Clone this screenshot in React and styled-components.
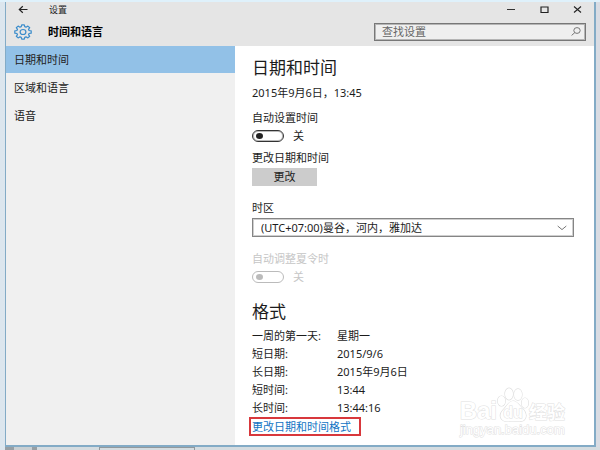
import React from "react";
import styled, { createGlobalStyle } from "styled-components";

const GlobalStyle = createGlobalStyle`
  *, *::before, *::after { box-sizing: border-box; }
  body {
    margin: 0;
    color: #1c1c1c;
    font: 11px/16px "Noto Sans", "Noto Sans CJK SC", sans-serif;
  }
  button, input, select { font: inherit; color: inherit; margin: 0; }
  h1, h2, p, dl, dd, ul { margin: 0; padding: 0; }
`;

const Desktop = styled.div`
  min-height: 100vh;
  display: flex;
  flex-direction: column;
  padding: 2px 4px 0 5px;
  background: linear-gradient(to right, #dce6ee 0, #e4eef6 50%, #d9dce3 51%, #d9dce3 100%);
  box-shadow: inset 0 2px #dff1fb;
`;

const Window = styled.div`
  position: relative;
  flex: 1;
  display: flex;
  flex-direction: column;
  border: solid #83abc6;
  border-width: 0 2px 2px 1px;
  background: #fff;
`;

const Header = styled.header`
  background: #e5e5e5;
`;

const TitleBar = styled.div`
  height: 15px;
  display: flex;
  align-items: center;
  padding: 0 12px;
  font-size: 9px;
`;

const IconButton = styled.button`
  display: flex;
  padding: 0;
  border: 0;
  background: none;
`;

const WindowTitle = styled.span`
  margin-left: 21px;
  flex: 1;
`;

const Controls = styled.div`
  display: flex;
  gap: 24px;
`;

const PageBar = styled.div`
  height: 29px;
  display: flex;
  align-items: center;
  padding: 0 8px;
`;

const PageTitle = styled.h1`
  margin-left: 16px;
  flex: 1;
  font-size: 11px;
  line-height: 16px;
  font-weight: 700;
  color: #000;
`;

const SearchBox = styled.label`
  flex: 0 1 212px;
  height: 18px;
  display: flex;
  align-items: center;
  padding: 0 4px 0 7px;
  border: 1px solid #777;
  outline: 1px solid #b5b5b5;
  outline-offset: -2px;
  background: #efefef;
`;

const SearchInput = styled.input`
  flex: 1;
  min-width: 0;
  height: 14px;
  padding: 0;
  border: 0;
  outline: 0;
  background: none;
  &::placeholder { color: #666; opacity: 1; }
`;

const Body = styled.div`
  flex: 1;
  display: grid;
  grid-template-columns: minmax(120px, 229px) 1fr;
`;

const Sidebar = styled.nav`
  background: #f0f0f0;
`;

const NavList = styled.ul`
  list-style: none;
  display: flex;
  flex-direction: column;
  gap: 1px;
`;

const NavLink = styled.a`
  display: block;
  padding: 0 8px;
  line-height: 27px;
  text-decoration: none;
  color: #222;
  background: ${(p) => (p.$active ? "#92c1e7" : "transparent")};
`;

const Content = styled.main`
  padding: 10px 20px 8px 17px;
`;

const Heading = styled.h2`
  margin-top: ${(p) => (p.$spaced ? "15px" : "0")};
  font-size: 17px;
  line-height: 24px;
  font-weight: 400;
`;

const CurrentTime = styled.p`
  margin-top: 5px;
`;

const Field = styled.div`
  display: flex;
  flex-direction: column;
  align-items: flex-start;
  margin-top: ${(p) => p.$space};
  gap: 2px;
  color: ${(p) => (p.$disabled ? "#c6c6c6" : "inherit")};
`;

const ToggleRow = styled.div`
  display: flex;
  align-items: center;
  gap: 9px;
`;

const Toggle = styled.input`
  appearance: none;
  width: 32px;
  height: 12px;
  display: flex;
  align-items: center;
  padding: 0 3px;
  border: 1px solid #333;
  border-radius: 6px;
  box-shadow: inset 0 0 0 1px #3335;
  &::before {
    content: "";
    width: 7px;
    height: 6px;
    border-radius: 50%;
    background: #222;
  }
  &:checked { justify-content: flex-end; }
  &:disabled { border-color: #bbb; box-shadow: none; }
  &:disabled::before { background: #bbb; }
`;

const ChangeButton = styled.button`
  width: 65px;
  height: 18px;
  padding: 0;
  border: 0;
  background: #ccc;
`;

const SelectBox = styled.div`
  align-self: stretch;
  display: grid;
  grid-template-columns: 1fr 24px;
  align-items: center;
  & > svg { grid-area: 1 / 2; pointer-events: none; justify-self: center; z-index: 1; }
`;

const Select = styled.select`
  grid-area: 1 / 1 / 2 / 3;
  appearance: none;
  width: 100%;
  height: 19px;
  padding: 0 24px 0 8px;
  border: 1px solid #858585;
  border-radius: 0;
  outline: 1px solid #cfcfcf;
  outline-offset: -2px;
  background: #fff;
`;

const Formats = styled.dl`
  margin-top: 3px;
  display: grid;
  grid-template-columns: 85px 1fr;
  line-height: 18px;
`;

const FormatLink = styled.a`
  display: block;
  width: max-content;
  margin-left: -3px;
  padding: 0 8px 0 1px;
  border: 2px solid #d8383c;
  line-height: 15px;
  text-decoration: none;
  color: #1274c4;
`;

const Watermark = styled.div`
  position: absolute;
  right: 29px;
  bottom: 8px;
  display: flex;
  flex-direction: column;
  align-items: center;
  color: #fff;
  -webkit-text-stroke: 1px #e0e0e0;
  paint-order: stroke fill;
  pointer-events: none;
`;

const Brand = styled.div`
  display: flex;
  align-items: flex-end;
  font: 700 24px/24px "Liberation Sans", sans-serif;
`;

const BrandCjk = styled.span`
  font: 700 18px/24px "Noto Sans CJK SC", sans-serif;
`;

const SiteName = styled.span`
  font: 13px/14px "Liberation Sans", sans-serif;
`;

const Taskbar = styled.div`
  height: 3px;
  margin: 0 -4px 0 0;
  display: flex;
  gap: 62px;
  background: #d5dce0;
`;

const TaskIcon = styled.div`
  width: 32px;
  background: linear-gradient(to right, #979fa4 9px, #c9cfd2 9px 27px, #979fa4 27px);
`;

const TaskItem = styled.div`
  width: 96px;
  border: 1px solid #92999d;
  border-bottom: 0;
`;

const GEAR = (() => {
  const pts = [];
  for (let i = 0; i < 8; i++) {
    [[-16, 6.3], [-9, 8.3], [9, 8.3], [16, 6.3]].forEach(([d, r]) => {
      const a = ((i * 45 + d) * Math.PI) / 180;
      pts.push(`${(9 + r * Math.sin(a)).toFixed(2)},${(8 - r * 0.88 * Math.cos(a)).toFixed(2)}`);
    });
  }
  return pts.join(" ");
})();

const FORMATS = [
  ["一周的第一天:", "星期一"],
  ["短日期:", "2015/9/6"],
  ["长日期:", "2015年9月6日"],
  ["短时间:", "13:44"],
  ["长时间:", "13:44:16"],
];

const PAGES = ["日期和时间", "区域和语言", "语音"];

export default function App() {
  return (
    <>
      <GlobalStyle />
      <Desktop>
        <Window>
          <Header>
            <TitleBar>
              <IconButton aria-label="返回">
                <svg width="10" height="9" viewBox="0 0 10 9" fill="none" stroke="#222" strokeWidth="1.2">
                  <path d="M9.5 4.5H1.3M4.8 1.2 1.3 4.5l3.5 3.3" />
                </svg>
              </IconButton>
              <WindowTitle>设置</WindowTitle>
              <Controls>
                <IconButton aria-label="最小化">
                  <svg width="9" height="9" stroke="#333"><path d="M0 4.5h8" /></svg>
                </IconButton>
                <IconButton aria-label="最大化">
                  <svg width="9" height="9" fill="none" stroke="#222" strokeWidth="1.2">
                    <path d="M1 2h7v5.5H1z" />
                  </svg>
                </IconButton>
                <IconButton aria-label="关闭">
                  <svg width="9" height="9" stroke="#222" strokeWidth="1.1">
                    <path d="M1 1.5l7 6M8 1.5l-7 6" />
                  </svg>
                </IconButton>
              </Controls>
            </TitleBar>
            <PageBar>
              <svg width="18" height="16" fill="none" stroke="#3a8ccb" strokeWidth="1.2" strokeLinejoin="round">
                <polygon points={GEAR} />
                <ellipse cx="9" cy="8" rx="2.9" ry="2.5" />
              </svg>
              <PageTitle>时间和语言</PageTitle>
              <SearchBox>
                <SearchInput type="search" placeholder="查找设置" aria-label="查找设置" />
                <svg width="10" height="9" fill="none" stroke="#777">
                  <ellipse cx="6" cy="3.5" rx="3.2" ry="2.9" />
                  <path d="M3.8 5.6.6 8.4" />
                </svg>
              </SearchBox>
            </PageBar>
          </Header>
          <Body>
            <Sidebar>
              <NavList>
                {PAGES.map((name, i) => (
                  <li key={name}>
                    <NavLink href="#" $active={i === 0}>{name}</NavLink>
                  </li>
                ))}
              </NavList>
            </Sidebar>
            <Content>
              <Heading>日期和时间</Heading>
              <CurrentTime>2015年9月6日，13:45</CurrentTime>
              <Field $space="9px">
                <label htmlFor="auto-time">自动设置时间</label>
                <ToggleRow>
                  <Toggle type="checkbox" role="switch" id="auto-time" />
                  <span>关</span>
                </ToggleRow>
              </Field>
              <Field $space="6px">
                <label htmlFor="change">更改日期和时间</label>
                <ChangeButton id="change">更改</ChangeButton>
              </Field>
              <Field $space="14px">
                <label htmlFor="zone">时区</label>
                <SelectBox>
                  <Select id="zone">
                    <option>(UTC+07:00)曼谷，河内，雅加达</option>
                  </Select>
                  <svg width="10" height="6" fill="none" stroke="#777">
                    <path d="M.7 1 5 4.6 9.3 1" />
                  </svg>
                </SelectBox>
              </Field>
              <Field $space="14px" $disabled>
                <label htmlFor="dst">自动调整夏令时</label>
                <ToggleRow>
                  <Toggle type="checkbox" role="switch" id="dst" disabled />
                  <span>关</span>
                </ToggleRow>
              </Field>
              <Heading $spaced>格式</Heading>
              <Formats>
                {FORMATS.map(([k, v]) => (
                  <React.Fragment key={k}>
                    <dt>{k}</dt>
                    <dd>{v}</dd>
                  </React.Fragment>
                ))}
              </Formats>
              <FormatLink href="#">更改日期和时间格式</FormatLink>
            </Content>
          </Body>
          <Watermark>
            <Brand>
              <span>Bai</span>
              <svg width="32" height="36" fill="#fff" stroke="#dedede" strokeWidth="1.2">
                <ellipse cx="4.5" cy="14" rx="3.8" ry="5" />
                <ellipse cx="12" cy="7" rx="4" ry="5.8" />
                <ellipse cx="21" cy="7.5" rx="4" ry="5.6" />
                <ellipse cx="28" cy="16" rx="3.4" ry="5" />
                <path d="M16 14c-4 0-6 5-9 8-4 4-4.500 8-2 10.500 3 3 7 1.500 11 1.500s9 1.500 11.500-1.500c2.500-3 1.500-7-1.500-10.500-3-3-6-8-10-8z" />
                <text x="16" y="31" textAnchor="middle" fontSize="16" strokeWidth="1">du</text>
              </svg>
              <BrandCjk>经验</BrandCjk>
            </Brand>
            <SiteName>jingyan.baidu.com</SiteName>
          </Watermark>
        </Window>
        <Taskbar>
          <TaskIcon />
          <TaskItem />
        </Taskbar>
      </Desktop>
    </>
  );
}
